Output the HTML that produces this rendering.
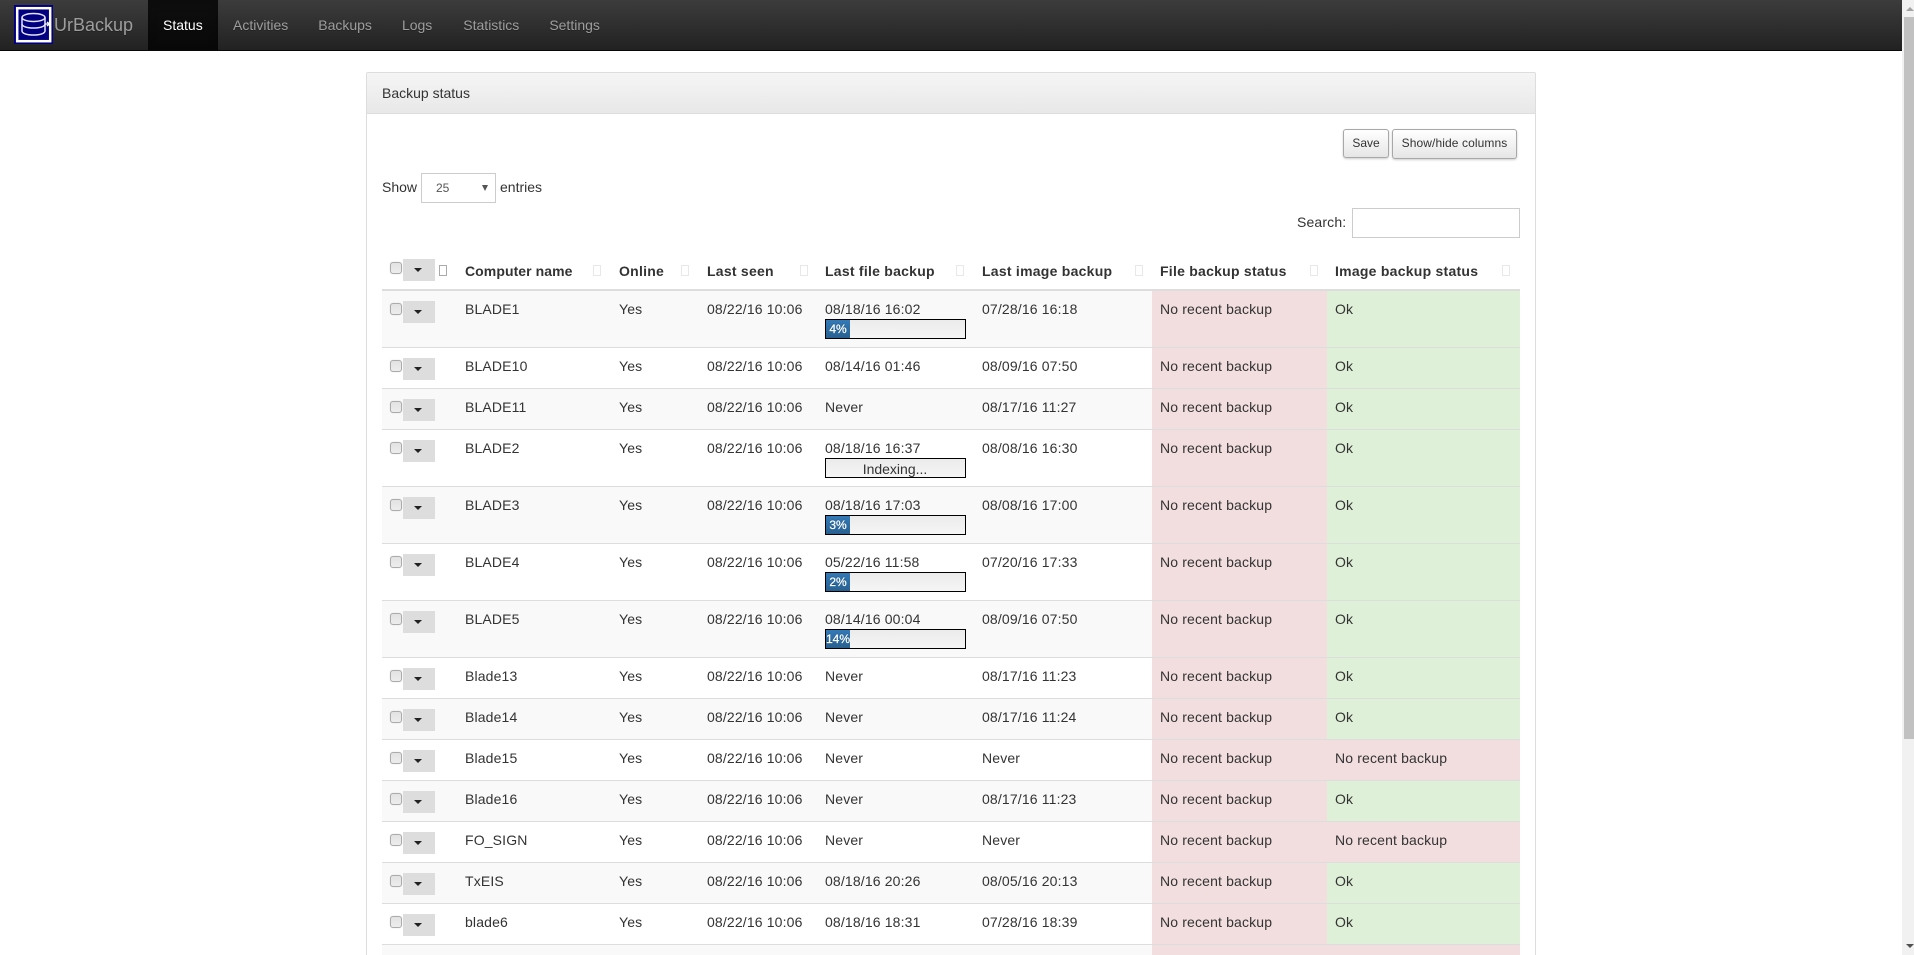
<!DOCTYPE html>
<html lang="en">
<head>
<meta charset="utf-8">
<title>UrBackup - Status</title>
<style>
html,body{margin:0;padding:0;width:1914px;height:955px;overflow:hidden;background:#fff}
body{font-family:"Liberation Sans",Arial,sans-serif;font-size:14px;line-height:20px;color:#333;position:relative}
*{box-sizing:border-box}
.nav{position:absolute;left:0;top:0;width:1902px;height:51px;background:linear-gradient(#3c3c3c,#222);border-bottom:1px solid #080808}
.logo{position:absolute;left:14px;top:5px;width:39px;height:39px;display:block}
.brand{position:absolute;left:54px;top:15px;font-size:18px;line-height:20px;color:#9d9d9d;text-shadow:0 1px 0 rgba(0,0,0,.25)}
.nav ul{list-style:none;margin:0;padding:0;position:absolute;left:148px;top:0;display:flex;height:50px}
.nav li{padding:15px 15px;color:#9d9d9d;line-height:20px;height:50px;text-shadow:0 1px 0 rgba(0,0,0,.25)}
.nav li.on{background:linear-gradient(#0f0f0f,#080808);color:#fff;box-shadow:inset 0 3px 9px rgba(0,0,0,.25);width:70px}
.panel{position:absolute;left:366px;top:72px;width:1170px;height:900px;border:1px solid #ddd;border-radius:2px 2px 0 0}
.phead{height:41px;padding:10px 15px;background:linear-gradient(#f5f5f5,#e8e8e8);border-bottom:1px solid #ddd}
.abs{position:absolute}
.btn{position:absolute;font-size:12px;line-height:18px;text-align:center;color:#333;border:1px solid #a8a8a8;border-radius:3px;background:linear-gradient(#fff,#e6e6e6);box-shadow:0 1px 2px rgba(0,0,0,.2)}
.sel{position:absolute;left:421px;top:173px;width:75px;height:30px;border:1px solid #ccc;background:#fff;font-size:12px;padding:4px 0 0 14px;color:#555}
.sel i{position:absolute;left:60px;top:11px;width:0;height:0;border-left:3.5px solid transparent;border-right:3.5px solid transparent;border-top:6px solid #555}
.inp{position:absolute;left:1352px;top:208px;width:168px;height:30px;border:1px solid #ccc;background:#fff}
table{position:absolute;left:382px;top:253px;width:1138px;table-layout:fixed;border-collapse:separate;border-spacing:0}
th{height:38px;padding:8px;border-bottom:2px solid #ddd;text-align:left;vertical-align:top;font-weight:bold;position:relative;letter-spacing:.25px;white-space:nowrap}
td{padding:8px;vertical-align:top;border-top:1px solid #ddd;position:relative;letter-spacing:.15px;white-space:nowrap}
tbody tr:first-child td{border-top:0;height:56px}
tr.s td{height:41px}
tr.t td{height:57px}
tr:nth-child(odd) td{background:#f9f9f9}
tr:nth-child(even) td{background:#fff}
tr td.r{background:#f2dede}
tr td.g{background:#dff0d8}
.cb{position:absolute;left:8px;top:12px;width:12px;height:12px;border:1px solid #ababab;border-radius:3px;background:linear-gradient(#e2e2e2,#ececec);box-shadow:0 0 1px #ccc}
.dd{position:absolute;left:21px;top:10px;width:32px;height:22px;background:#ddd}
.dd:after{content:"";position:absolute;left:11px;top:9px;width:0;height:0;border-left:4px solid transparent;border-right:4px solid transparent;border-top:4px solid #222}
th .cb{top:9px}
th .dd{top:6px}
.sort{position:absolute;top:12px;width:8px;height:11px;border:1px solid #999;background:#fff;opacity:.22}
.sort.d{opacity:1;border-color:#aaa}
.pg{height:20px;width:141px;border:1px solid #000;background:linear-gradient(#ebebeb,#f5f5f5);letter-spacing:0;position:relative}
.pg b{display:block;font-weight:normal;width:24px;height:18px;font-size:12px;line-height:19px;text-align:center;color:#fff;background:linear-gradient(#337ab7,#286090);white-space:nowrap;-webkit-text-stroke:.25px #fff;text-shadow:0 -1px 0 rgba(0,0,0,.25)}
.pg span{display:block;text-align:center;line-height:20px;font-size:14px;color:#333;padding-right:1px}
.sb{position:absolute;left:1902px;top:0;width:12px;height:955px;background:#f1f1f1}
.th{position:absolute;left:2px;top:17px;width:10px;height:722px;background:#c1c1c1}
.up{position:absolute;left:4px;top:7px;width:0;height:0;border-left:4px solid transparent;border-right:4px solid transparent;border-bottom:4px solid #a3a3a3}
.dn{position:absolute;left:4px;top:944px;width:0;height:0;border-left:4px solid transparent;border-right:4px solid transparent;border-top:4px solid #505050}
</style>
</head>
<body>
<div class="nav">
<svg class="logo" viewBox="0 0 39 39" xmlns="http://www.w3.org/2000/svg">
<rect width="39" height="39" fill="#000080"/>
<rect x="3.200" y="3.200" width="33" height="33" fill="none" stroke="#fff" stroke-width="2.500"/>
<g fill="none" stroke="#e4e4f4" stroke-width="1.5">
<ellipse cx="19.5" cy="12.5" rx="11.5" ry="4"/>
<path d="M8 12.5V26c0 2.4 5 4 11.5 4S31 28.400 31 26V12.500"/>
<path d="M8 19c0 2.400 5 4 11.500 4S31 21.400 31 19"/>
</g>
<path d="M31 19h4M33 17l2.500 2-2.500 2" fill="none" stroke="#fff" stroke-width="1.300"/>
</svg>
<div class="brand">UrBackup</div>
<ul><li class="on">Status</li><li>Activities</li><li>Backups</li><li>Logs</li><li style="margin-left:1px">Statistics</li><li>Settings</li></ul>
</div>

<div class="panel"><div class="phead">Backup status</div></div>

<div class="btn" style="left:1343px;top:129px;width:46px;height:29px;padding-top:4px">Save</div>
<div class="btn" style="left:1392px;top:129px;width:125px;height:30px;padding-top:4px;letter-spacing:.1px">Show/hide columns</div>

<div class="abs" style="left:382px;top:177px">Show</div>
<div class="sel">25<i></i></div>
<div class="abs" style="left:500px;top:177px">entries</div>
<div class="abs" style="left:1297px;top:212px;letter-spacing:.15px">Search:</div>
<div class="inp"></div>

<table>
<colgroup><col style="width:75px"><col style="width:154px"><col style="width:88px"><col style="width:118px"><col style="width:157px"><col style="width:178px"><col style="width:175px"><col style="width:193px"></colgroup>
<thead><tr>
<th><span class="cb"></span><span class="dd"></span><span class="sort d" style="left:57px"></span></th>
<th style="letter-spacing:.07px">Computer name<span class="sort" style="left:136px"></span></th>
<th>Online<span class="sort" style="left:70px"></span></th>
<th>Last seen<span class="sort" style="left:101px"></span></th>
<th>Last file backup<span class="sort" style="left:139px"></span></th>
<th>Last image backup<span class="sort" style="left:161px"></span></th>
<th>File backup status<span class="sort" style="left:158px"></span></th>
<th>Image backup status<span class="sort" style="left:175px"></span></th>
</tr></thead>
<tbody>
<tr class="t"><td><span class="cb"></span><span class="dd"></span></td><td>BLADE1</td><td>Yes</td><td>08/22/16 10:06</td><td>08/18/16 16:02<div class="pg"><b>4%</b></div></td><td>07/28/16 16:18</td><td class="r">No recent backup</td><td class="g">Ok</td></tr>
<tr class="s"><td><span class="cb"></span><span class="dd"></span></td><td>BLADE10</td><td>Yes</td><td>08/22/16 10:06</td><td>08/14/16 01:46</td><td>08/09/16 07:50</td><td class="r">No recent backup</td><td class="g">Ok</td></tr>
<tr class="s"><td><span class="cb"></span><span class="dd"></span></td><td>BLADE11</td><td>Yes</td><td>08/22/16 10:06</td><td>Never</td><td>08/17/16 11:27</td><td class="r">No recent backup</td><td class="g">Ok</td></tr>
<tr class="t"><td><span class="cb"></span><span class="dd"></span></td><td>BLADE2</td><td>Yes</td><td>08/22/16 10:06</td><td>08/18/16 16:37<div class="pg"><span>Indexing...</span></div></td><td>08/08/16 16:30</td><td class="r">No recent backup</td><td class="g">Ok</td></tr>
<tr class="t"><td><span class="cb"></span><span class="dd"></span></td><td>BLADE3</td><td>Yes</td><td>08/22/16 10:06</td><td>08/18/16 17:03<div class="pg"><b>3%</b></div></td><td>08/08/16 17:00</td><td class="r">No recent backup</td><td class="g">Ok</td></tr>
<tr class="t"><td><span class="cb"></span><span class="dd"></span></td><td>BLADE4</td><td>Yes</td><td>08/22/16 10:06</td><td>05/22/16 11:58<div class="pg"><b>2%</b></div></td><td>07/20/16 17:33</td><td class="r">No recent backup</td><td class="g">Ok</td></tr>
<tr class="t"><td><span class="cb"></span><span class="dd"></span></td><td>BLADE5</td><td>Yes</td><td>08/22/16 10:06</td><td>08/14/16 00:04<div class="pg"><b>14%</b></div></td><td>08/09/16 07:50</td><td class="r">No recent backup</td><td class="g">Ok</td></tr>
<tr class="s"><td><span class="cb"></span><span class="dd"></span></td><td>Blade13</td><td>Yes</td><td>08/22/16 10:06</td><td>Never</td><td>08/17/16 11:23</td><td class="r">No recent backup</td><td class="g">Ok</td></tr>
<tr class="s"><td><span class="cb"></span><span class="dd"></span></td><td>Blade14</td><td>Yes</td><td>08/22/16 10:06</td><td>Never</td><td>08/17/16 11:24</td><td class="r">No recent backup</td><td class="g">Ok</td></tr>
<tr class="s"><td><span class="cb"></span><span class="dd"></span></td><td>Blade15</td><td>Yes</td><td>08/22/16 10:06</td><td>Never</td><td>Never</td><td class="r">No recent backup</td><td class="r">No recent backup</td></tr>
<tr class="s"><td><span class="cb"></span><span class="dd"></span></td><td>Blade16</td><td>Yes</td><td>08/22/16 10:06</td><td>Never</td><td>08/17/16 11:23</td><td class="r">No recent backup</td><td class="g">Ok</td></tr>
<tr class="s"><td><span class="cb"></span><span class="dd"></span></td><td>FO_SIGN</td><td>Yes</td><td>08/22/16 10:06</td><td>Never</td><td>Never</td><td class="r">No recent backup</td><td class="r">No recent backup</td></tr>
<tr class="s"><td><span class="cb"></span><span class="dd"></span></td><td>TxEIS</td><td>Yes</td><td>08/22/16 10:06</td><td>08/18/16 20:26</td><td>08/05/16 20:13</td><td class="r">No recent backup</td><td class="g">Ok</td></tr>
<tr class="s"><td><span class="cb"></span><span class="dd"></span></td><td>blade6</td><td>Yes</td><td>08/22/16 10:06</td><td>08/18/16 18:31</td><td>07/28/16 18:39</td><td class="r">No recent backup</td><td class="g">Ok</td></tr>
<tr class="s"><td></td><td></td><td></td><td></td><td></td><td></td><td class="r"></td><td class="r"></td></tr>
</tbody>
</table>

<div class="sb"><div class="up"></div><div class="th"></div><div class="dn"></div></div>
</body>
</html>
